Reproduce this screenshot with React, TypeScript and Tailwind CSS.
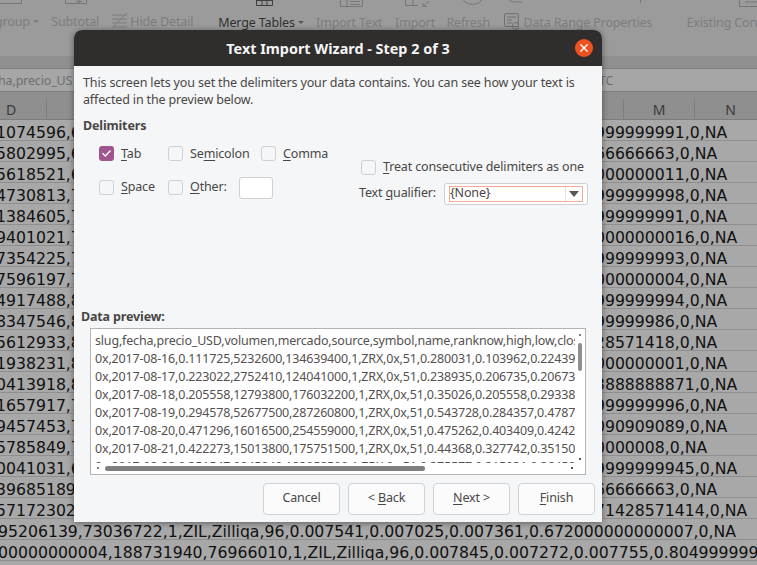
import React from "react";

const sheetRows: [string, string][] = [
  ["1074596,6", "0.99999999991,0,NA"],
  ["5802995,6", "0.9966666663,0,NA"],
  ["5618521,6", "0.99000000011,0,NA"],
  ["4730813,7", "0.99999999998,0,NA"],
  ["1384605,7", "0.99999999991,0,NA"],
  ["9401021,7", "0.990000000016,0,NA"],
  ["7354225,7", "0.99999999993,0,NA"],
  ["7596197,7", "0.99000000004,0,NA"],
  ["4917488,8", "0.99999999994,0,NA"],
  ["8347546,8", "0.9999999986,0,NA"],
  ["5612933,81", "0.9928571418,0,NA"],
  ["1938231,8", "0.99000000001,0,NA"],
  ["0413918,8", "0.993888888871,0,NA"],
  ["1657917,7", "0.99999999996,0,NA"],
  ["9457453,7", "0.99090909089,0,NA"],
  ["5785849,7", "0.990000008,0,NA"],
  ["0041031,6", "0.999999999945,0,NA"],
  ["39685189", "0.9966666663,0,NA"],
  ["57172302", "0.9971428571414,0,NA"],
];

const previewLines = [
  "slug,fecha,precio_USD,volumen,mercado,source,symbol,name,ranknow,high,low,close",
  "0x,2017-08-16,0.111725,5232600,134639400,1,ZRX,0x,51,0.280031,0.103962,0.22439",
  "0x,2017-08-17,0.223022,2752410,124041000,1,ZRX,0x,51,0.238935,0.206735,0.20673",
  "0x,2017-08-18,0.205558,12793800,176032200,1,ZRX,0x,51,0.35026,0.205558,0.29338",
  "0x,2017-08-19,0.294578,52677500,287260800,1,ZRX,0x,51,0.543728,0.284357,0.4787",
  "0x,2017-08-20,0.471296,16016500,254559000,1,ZRX,0x,51,0.475262,0.403409,0.4242",
  "0x,2017-08-21,0.422273,15013800,175751500,1,ZRX,0x,51,0.44368,0.327742,0.35150",
  "0x,2017-08-22,0.351547,9045040,183052500,1,ZRX,0x,51,0.375577,0.315031,0.26459",
];

function Box({ checked }: { checked?: boolean }) {
  return checked ? (
    <span className="flex h-[15px] w-[15px] shrink-0 items-center justify-center rounded-[3px] bg-[#a0558f]">
      <svg width="11" height="9" viewBox="0 0 11 9" fill="none" stroke="#ffffff" strokeWidth="1.3">
        <path d="M1.5 4.2 L4.3 7 L9.5 1.5" />
      </svg>
    </span>
  ) : (
    <span className="block h-[15px] w-[15px] shrink-0 rounded-[3px] border border-[#cdd0d4] bg-[#f5f6f7]" />
  );
}

function Btn({ children }: { children: React.ReactNode }) {
  return (
    <div className="flex h-[32px] w-[77px] items-center justify-center rounded-[4px] border border-[#cfd2d6] bg-[#fbfbfc] text-[#4a4646]">
      <span>{children}</span>
    </div>
  );
}

function U({ children }: { children: React.ReactNode }) {
  return <span className="underline underline-offset-2">{children}</span>;
}

function Caret({ fill }: { fill: string }) {
  return (
    <svg width="6" height="3" viewBox="0 0 6 3" className="mb-[3px] ml-[3px] inline-block">
      <path d="M0 0H6L3 3Z" fill={fill} />
    </svg>
  );
}

function ToolbarIconTops() {
  return (
    <svg width="757" height="8" viewBox="0 0 757 8" fill="none" stroke="#767676" className="block">
      <path d="M0 3.5H21.5V-2" />
      <path d="M65.5 -2V3.5H86.5V-2M76 1.5H82M79 -1V3" />
      <path d="M256.5 -2V5.5H272.5V-2M256.5 0.5H272.5M262 -2V5.5M267 -2V5.5" stroke="#3f3f3f" />
      <path d="M340.5 -2V6.5H362.5V-2M347 -2V6.5M350 1.5H360M350 4.5H360" />
      <path d="M405.5 -2V5.5H418M413 -2V5.5M429 1L423 6.5M423 3V6.5H427" />
      <path d="M463 -1C465 6 480 6 482 -1" />
      <path d="M508 -2C509 1 512 2 515 2H522" />
      <path d="M640.5 -2V3" />
      <path d="M739.5 -2V6.5H757M745 2H757" />
    </svg>
  );
}

export default function App() {
  return (
    <div className="relative h-[565px] w-[757px] overflow-hidden bg-[#a8a8a8] font-['Noto_Sans',sans-serif] text-[12.5px] tracking-[-0.15px]">
      {/* toolbar */}
      <div className="h-[56px] bg-[#9b9b9b]">
        <ToolbarIconTops />
        <div className="flex items-start whitespace-nowrap pt-[5px] text-[#7d7d7d]">
          <span className="ml-[-5px] w-[57px]">group<Caret fill="#7d7d7d" /></span>
          <span className="w-[60px]">Subtotal</span>
          <svg width="18" height="16" viewBox="0 0 18 16" fill="none" stroke="#7d7d7d" className="mr-[2px] mt-[-1px]">
            <path d="M1 3h15M1 7h15M1 11h15M1 15h15M2 15L16 1" />
          </svg>
          <span className="w-[89px]">Hide Detail</span>
          <span className="w-[99px] pt-[1px] text-[#2f2f2f]">Merge Tables<Caret fill="#555555" /></span>
          <span className="w-[80px] pt-[1px]">Import Text</span>
          <span className="w-[52px] pt-[1px]">Import</span>
          <span className="w-[58px] pt-[1px]">Refresh</span>
          <svg width="16" height="18" viewBox="0 0 16 18" fill="none" stroke="#6f6f6f" className="mr-[4px]">
            <rect x="0.5" y="0.5" width="14" height="13" rx="1" />
            <path d="M3 4h9M3 7h5M3 10h5" />
            <circle cx="12" cy="13" r="3.5" />
          </svg>
          <span className="w-[165px] pt-[1px]">Data Range Properties</span>
          <span className="pt-[1px]">Existing Con</span>
        </div>
      </div>
      <div className="h-[12px] bg-[#909090]" />
      {/* formula bar */}
      <div className="flex h-[24px] items-center border-y border-[#808080] bg-[#a6a6a6] pt-[3px] text-[#6e6e6e]">
        <span className="ml-[-2px] w-[601px] shrink-0">ha,precio_US</span>
        <span>TC</span>
      </div>
      {/* column headers */}
      <div className="flex h-[28px] items-end border-b border-[#7c7c7c] bg-[#8f8f8f] text-[14px] text-[#3a3a3a]">
        <span className="flex h-[20px] w-[47px] shrink-0 items-center border-r border-[#7d7d7d] pl-[6px]">D</span>
        <span className="w-[576px] shrink-0" />
        <span className="flex h-[20px] w-[72px] shrink-0 items-center justify-center border-x border-[#7d7d7d]">M</span>
        <span className="flex h-[20px] w-[71px] shrink-0 items-center justify-center">N</span>
      </div>
      {/* sheet rows */}
      <div className="font-['DejaVu_Sans',sans-serif] text-[15.7px] leading-[14px] tracking-normal text-[#111111]">
        {sheetRows.map(([l, r], i) => (
          <div key={i} className="flex h-[21px] items-center overflow-hidden whitespace-nowrap border-b border-[#8f8f8f] pt-[6px]">
            <span className="ml-[-4px] w-[564px] shrink-0 overflow-hidden">{l}</span>
            <span>{r}</span>
          </div>
        ))}
        <div className="flex h-[21px] items-center overflow-hidden whitespace-nowrap border-b border-[#8f8f8f] pt-[6px]">
          <span className="ml-[-2px]">95206139,73036722,1,ZIL,Zilliqa,96,0.007541,0.007025,0.007361,0.672000000000007,0,NA</span>
        </div>
        <div className="flex h-[21px] items-center overflow-hidden whitespace-nowrap border-b border-[#8f8f8f] pt-[6px]">
          <span className="ml-[-2px]">00000000004,188731940,76966010,1,ZIL,Zilliqa,96,0.007845,0.007272,0.007755,0.804999999</span>
        </div>
      </div>

      {/* dialog */}
      <div className="absolute left-[74px] top-[30px] flex h-[492px] w-[528px] flex-col overflow-hidden rounded-t-[8px] bg-[#f5f6f7] shadow-[0_1px_6px_rgba(0,0,0,0.45)]">
        <div className="relative flex h-[36px] shrink-0 items-center justify-center bg-[#302d2d] pt-[1px] text-[14.4px] font-bold tracking-[0px] text-[#f5f5f5]">
          Text Import Wizard - Step 2 of 3
          <span className="absolute left-[501px] top-[9px] flex h-[18px] w-[18px] items-center justify-center rounded-full bg-[#ee5223]">
            <svg width="10" height="10" viewBox="0 0 10 10" stroke="#ffffff" strokeWidth="1.4">
              <path d="M1.5 1.5 L8.5 8.5 M8.5 1.5 L1.5 8.5" />
            </svg>
          </span>
        </div>
        <div className="flex flex-1 flex-col pl-[9px] text-[#4a4646]">
          <p className="pt-[8px] leading-[17px]">
            This screen lets you set the delimiters your data contains. You can see how your text is
            <br />
            affected in the preview below.
          </p>
          <p className="mt-[9px] font-bold leading-[17px]">Delimiters</p>
          <div className="flex">
            <div className="ml-[16px] mt-[10px] flex w-[260px] flex-col gap-[13px]">
              <div className="flex items-center">
                <Box checked />
                <span className="ml-[7px] w-[47px] pt-[1px]"><U>T</U>ab</span>
                <Box />
                <span className="ml-[7px] w-[71px] pt-[1px]">Se<U>m</U>icolon</span>
                <Box />
                <span className="ml-[7px] pt-[1px]"><U>C</U>omma</span>
              </div>
              <div className="flex items-center">
                <Box />
                <span className="ml-[7px] w-[47px]"><U>S</U>pace</span>
                <Box />
                <span className="ml-[7px] w-[49px]"><U>O</U>ther:</span>
                <span className="h-[22px] w-[34px] rounded-[3px] border border-[#cdd0d4] bg-white" />
              </div>
            </div>
            <div className="mt-[24px] flex flex-col">
              <div className="flex items-center pl-[2px]">
                <Box />
                <span className="ml-[7px] whitespace-nowrap"><U>T</U>reat consecutive delimiters as one</span>
              </div>
              <div className="mt-[6px] flex items-center">
                <span className="w-[85px] whitespace-nowrap">Text <U>q</U>ualifier:</span>
                <div className="flex h-[22px] w-[144px] items-center rounded-[3px] border border-[#cdd0d4] bg-white px-[4px] py-[2px]">
                  <div className="flex h-full flex-1 items-center justify-between border border-[#f4ad94] pr-[3px]">
                    <span>{"{None}"}</span>
                    <span className="flex h-full items-center border-l border-[#e0e0e0] pl-[3px]">
                      <svg width="10" height="6" viewBox="0 0 10 6"><path d="M0 0H10L5 6Z" fill="#5a5656" /></svg>
                    </span>
                  </div>
                </div>
              </div>
            </div>
          </div>
          <p className="ml-[-2px] mt-[103px] font-bold leading-[17px]">Data preview:</p>
          <div className="relative ml-[7px] mt-[3px] h-[147px] w-[496px] border border-[#b3b3b3] bg-white pl-[4px] pt-[3px] tracking-[-0.18px] text-[#555151]">
            <div className="h-[131px] w-[480px] overflow-hidden">
              {previewLines.map((t) => (
                <div key={t} className="whitespace-nowrap leading-[18px]">{t}</div>
              ))}
            </div>
            <span className="absolute left-[14px] top-[137px] h-[5px] w-[320px] rounded-full bg-[#7f7f7f]" />
            <span className="absolute left-[487px] top-[14px] h-[28px] w-[4px] rounded-full bg-[#8f8f8f]" />
            <span className="absolute left-[6px] top-[138px] h-[2px] w-[2px] bg-[#7f7f7f]" />
            <span className="absolute left-[480px] top-[138px] h-[2px] w-[2px] bg-[#555555]" />
            <span className="absolute left-[488px] top-[129px] h-[2px] w-[2px] bg-[#555555]" />
            <span className="absolute left-[488px] top-[5px] h-[2px] w-[2px] bg-[#7f7f7f]" />
          </div>
          <div className="ml-[180px] mt-[8px] flex gap-[8px]">
            <Btn>Cancel</Btn>
            <Btn>&lt; <U>B</U>ack</Btn>
            <Btn><U>N</U>ext &gt;</Btn>
            <Btn><U>F</U>inish</Btn>
          </div>
        </div>
      </div>
    </div>
  );
}
